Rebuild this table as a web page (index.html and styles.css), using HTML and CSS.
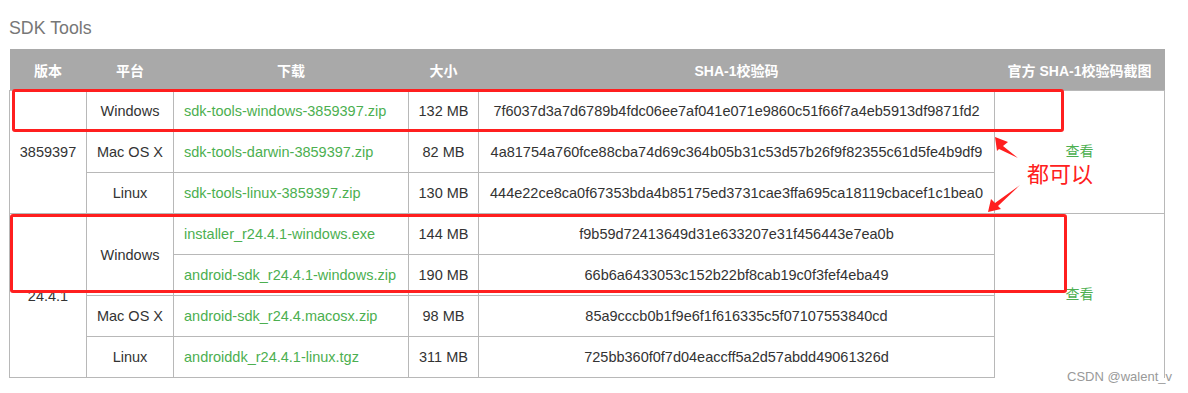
FILE: index.html
```html
<!DOCTYPE html>
<html lang="zh">
<head>
<meta charset="utf-8">
<link rel="stylesheet" href="styles.css">
</head>
<body>
<div class="page">
  <h2 class="title">SDK Tools</h2>
  <table class="sdk">
    <colgroup>
      <col class="c-ver"><col class="c-plat"><col class="c-dl"><col class="c-size"><col class="c-sha"><col class="c-shot">
    </colgroup>
    <thead>
      <tr><th>版本</th><th>平台</th><th>下载</th><th>大小</th><th>SHA-1校验码</th><th>官方 SHA-1校验码截图</th></tr>
    </thead>
    <tbody>
      <tr>
        <td rowspan="3">3859397</td>
        <td>Windows</td>
        <td class="dl"><a>sdk-tools-windows-3859397.zip</a></td>
        <td>132 MB</td>
        <td>7f6037d3a7d6789b4fdc06ee7af041e071e9860c51f66f7a4eb5913df9871fd2</td>
        <td rowspan="3" class="shot"><a>查看</a></td>
      </tr>
      <tr>
        <td>Mac OS X</td>
        <td class="dl"><a>sdk-tools-darwin-3859397.zip</a></td>
        <td>82 MB</td>
        <td>4a81754a760fce88cba74d69c364b05b31c53d57b26f9f82355c61d5fe4b9df9</td>
      </tr>
      <tr>
        <td>Linux</td>
        <td class="dl"><a>sdk-tools-linux-3859397.zip</a></td>
        <td>130 MB</td>
        <td>444e22ce8ca0f67353bda4b85175ed3731cae3ffa695ca18119cbacef1c1bea0</td>
      </tr>
      <tr>
        <td rowspan="4">24.4.1</td>
        <td rowspan="2">Windows</td>
        <td class="dl"><a>installer_r24.4.1-windows.exe</a></td>
        <td>144 MB</td>
        <td>f9b59d72413649d31e633207e31f456443e7ea0b</td>
        <td rowspan="4" class="shot open-bottom"><a>查看</a></td>
      </tr>
      <tr>
        <td class="dl"><a>android-sdk_r24.4.1-windows.zip</a></td>
        <td>190 MB</td>
        <td>66b6a6433053c152b22bf8cab19c0f3fef4eba49</td>
      </tr>
      <tr>
        <td>Mac OS X</td>
        <td class="dl"><a>android-sdk_r24.4.macosx.zip</a></td>
        <td>98 MB</td>
        <td>85a9cccb0b1f9e6f1f616335c5f07107553840cd</td>
      </tr>
      <tr>
        <td>Linux</td>
        <td class="dl"><a>androiddk_r24.4.1-linux.tgz</a></td>
        <td>311 MB</td>
        <td>725bb360f0f7d04eaccff5a2d57abdd49061326d</td>
      </tr>
    </tbody>
  </table>

  <div class="mark mark-one"></div>
  <div class="mark mark-two"></div>
  <svg class="arrows" width="50" height="95" viewBox="0 0 50 95">
    <polygon points="15,12 28,17 23,21 38,33 19,24 17,26" fill="#ff1f1f"/>
    <polygon points="8,87 11,74 15,78 40,60 18,81 21,84" fill="#ff1f1f"/>
  </svg>
  <div class="note">都可以</div>
  <div class="watermark">CSDN @walent_v</div>
</div>
</body>
</html>
```

FILE: styles.css
```css
html, body {
  margin: 0;
  padding: 0;
  background: #fff;
}

.page {
  position: relative;
  width: 1188px;
  height: 393px;
  padding: 0 0 0 9px;
  box-sizing: border-box;
  font-family: "Liberation Sans", "Noto Sans CJK SC", Arial, sans-serif;
  color: #333;
  overflow: hidden;
}

.title {
  margin: 0;
  height: 49px;
  padding-top: 18px;
  box-sizing: border-box;
  font-size: 17.8px;
  font-weight: normal;
  line-height: 20px;
  color: #777;
}

.sdk {
  border-collapse: collapse;
  table-layout: fixed;
  width: 1155px;
  font-size: 14.5px;
}

.c-ver { width: 77px; }
.c-plat { width: 87px; }
.c-dl { width: 235px; }
.c-size { width: 70px; }
.c-sha { width: 516px; }
.c-shot { width: 170px; }

.sdk th {
  background: #a9a9a9;
  color: #fff;
  font-weight: bold;
  font-size: 14px;
  height: 41px;
  padding: 0;
  text-align: center;
  white-space: nowrap;
  border: 0;
}

.sdk td {
  border: 1px solid #b8b8b8;
  height: 40px;
  padding: 0;
  text-align: center;
  white-space: nowrap;
}

.sdk td.dl {
  text-align: left;
  padding-left: 10px;
}

.sdk td.shot {
  font-size: 14px;
  line-height: 15px;
  padding-bottom: 2px;
}

.sdk td.shot a {
  display: inline-block;
  line-height: 15px;
}

.sdk td.open-bottom {
  border-bottom: 0;
}

.sdk a {
  color: #4caf50;
  text-decoration: none;
}

.mark {
  position: absolute;
  border: 3px solid #ff1f1f;
  border-radius: 3px;
  box-sizing: border-box;
}

.mark-one {
  left: 12px;
  top: 89px;
  width: 1052px;
  height: 43px;
}

.mark-two {
  left: 10px;
  top: 214px;
  width: 1057px;
  height: 79px;
}

.arrows {
  position: absolute;
  left: 980px;
  top: 125px;
}

.note {
  position: absolute;
  left: 1027px;
  top: 161px;
  font-family: "Noto Sans CJK SC", sans-serif;
  font-size: 22px;
  line-height: 22px;
  color: #ff2020;
}

.watermark {
  position: absolute;
  right: 16px;
  top: 369px;
  font-size: 13px;
  line-height: 16px;
  color: #999;
}
```
